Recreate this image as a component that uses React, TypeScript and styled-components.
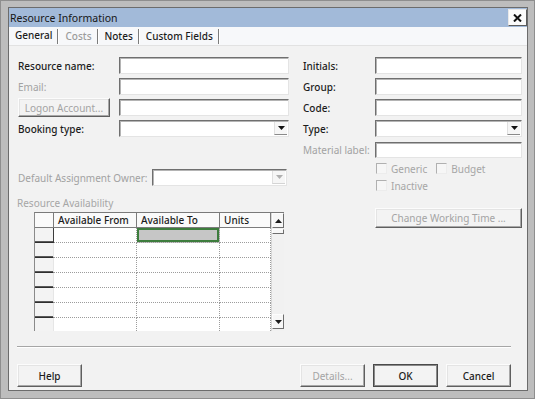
import styled, { createGlobalStyle } from "styled-components";

const GlobalStyle = createGlobalStyle`
  html, body {
    margin: 0;
    padding: 0;
  }
  body {
    font-family: "Noto Sans", "Open Sans", sans-serif;
    font-size: 10px;
    color: #1c1c1c;
  }
  * {
    box-sizing: border-box;
  }
`;

const Window = styled.div`
  width: 535px;
  height: 399px;
  padding: 6px 6px 7px 7px;
  background: #bdbdbd;
  border: 1px solid #8e8e8e;
`;

const Panel = styled.div`
  display: flex;
  flex-direction: column;
  height: 100%;
  border: 1px solid #6c6c6c;
  background: #f2f2f2;
`;

const TitleBar = styled.div`
  display: flex;
  align-items: center;
  justify-content: space-between;
  height: 19px;
  padding-left: 1px;
  background: #a2bad9;
  font-size: 10.5px;
  color: #161616;
`;

const CloseButton = styled.button`
  display: flex;
  align-items: center;
  justify-content: center;
  width: 19px;
  height: 17px;
  padding: 0;
  background: #fbfbfb;
  border: 1px solid;
  border-color: #e8e8e8 #5c5c5c #5c5c5c #e8e8e8;
`;

const TabStrip = styled.div`
  display: flex;
  align-items: center;
  height: 19px;
  padding-left: 3px;
  background: #f7f8fa;
  border-bottom: 1px solid #e2e2e2;
`;

const Tab = styled.div<{ $disabled?: boolean }>`
  height: 15px;
  line-height: 14px;
  padding: 0 5px 0 7px;
  border-right: 1px solid #7c7c7c;
  box-shadow: 1px 0 0 #ffffff;
  color: ${(p) => (p.$disabled ? "#9c9c9c" : "#1c1c1c")};
  font-weight: 500;

  &:first-child {
    padding-left: 3px;
    line-height: 12px;
  }
`;

const Body = styled.div`
  flex: 1;
  display: flex;
  flex-direction: column;
  padding: 10px 5px 3px 8px;
`;

const TopArea = styled.div`
  display: flex;
  gap: 13px;
`;

const Column = styled.div<{ $width?: number }>`
  display: flex;
  flex-direction: column;
  gap: 2px;
  width: ${(p) => (p.$width ? `${p.$width}px` : "auto")};
  flex: ${(p) => (p.$width ? "none" : "1")};
`;

const Row = styled.div<{ $top?: number }>`
  display: flex;
  align-items: center;
  height: 19px;
  margin-top: ${(p) => p.$top ?? 0}px;
`;

const Label = styled.div<{ $width: number; $disabled?: boolean }>`
  width: ${(p) => p.$width}px;
  flex: none;
  padding-left: 1px;
  white-space: nowrap;
  font-weight: ${(p) => (p.$disabled ? 400 : 500)};
  color: ${(p) => (p.$disabled ? "#a2a2a2" : "#1c1c1c")};
`;

const Field = styled.div<{ $height?: number; $right?: number }>`
  position: relative;
  flex: 1;
  height: ${(p) => p.$height ?? 17}px;
  margin-right: ${(p) => p.$right ?? 0}px;
  background: #ffffff;
  border: 1px solid;
  border-color: #6f6f6f #e4e4e4 #e4e4e4 #6f6f6f;
  box-shadow: inset 1px 1px 0 #b4b4b4;
`;

const DropArrow = styled.div<{ $disabled?: boolean }>`
  position: absolute;
  top: 1px;
  right: 1px;
  bottom: 1px;
  width: 13px;
  display: flex;
  align-items: center;
  justify-content: center;
  background: #f6f6f6;
  border-left: 1px solid #e0e0e0;
  border-bottom: 1px solid ${(p) => (p.$disabled ? "#d4d4d4" : "#8a8a8a")};
  color: ${(p) => (p.$disabled ? "#b0b0b0" : "#111111")};
`;

const RaisedButton = styled.button<{ $width?: number; $disabled?: boolean; $default?: boolean }>`
  width: ${(p) => (p.$width ? `${p.$width}px` : "100%")};
  height: ${(p) => (p.$width ? "19px" : "20px")};
  padding: 0;
  font-family: inherit;
  font-size: 10px;
  font-weight: ${(p) => (p.$disabled ? 400 : 600)};
  color: ${(p) => (p.$disabled ? "#a4a4a4" : "#1c1c1c")};
  background: #f3f3f3;
  border: 1px solid;
  border-color: ${(p) => (p.$default ? "#4a4a4a" : "#fcfcfc #5f5f5f #5f5f5f #fcfcfc")};
  box-shadow: ${(p) =>
    p.$default ? "inset 0 0 0 1px #8a8a8a" : "inset -1px -1px 0 #a8a8a8, inset 1px 1px 0 #e4e4e4"};
`;

const CheckRow = styled.div<{ $top: number }>`
  display: flex;
  align-items: center;
  gap: 4px;
  height: 13px;
  margin-top: ${(p) => p.$top}px;
  padding-left: 74px;
`;

const CheckBox = styled.span`
  width: 11px;
  height: 11px;
  flex: none;
  background: #f6f6f6;
  border: 1px solid;
  border-color: #b0b0b0 #ececec #ececec #b0b0b0;
`;

const CheckText = styled.span<{ $gap?: number }>`
  color: #a6a6a6;
  margin-right: ${(p) => p.$gap ?? 0}px;
`;

const SectionTitle = styled.div`
  margin-top: 7px;
  height: 14px;
  color: #a6a6a6;
`;

const GridFrame = styled.div`
  display: flex;
  width: 250px;
  height: 119px;
  margin-left: 17px;
  overflow: hidden;
  border-top: 1px solid #7a7a7a;
  border-left: 1px solid #8a8a8a;
  background: #ffffff;
`;

const Table = styled.table`
  width: 236px;
  border-spacing: 0;
  table-layout: fixed;
`;

const HeadCell = styled.th<{ $width: number }>`
  width: ${(p) => p.$width}px;
  height: 15px;
  padding: 0 0 0 4px;
  text-align: left;
  font-weight: 500;
  background: #fafafa;
  border-right: 1px solid #7c7c7c;
  border-bottom: 1px solid #7c7c7c;
`;

const RowHead = styled.td<{ $mark?: boolean }>`
  height: 15px;
  padding: 0;
  background: #f3f3f3;
  border-bottom: 1px solid #2e2e2e;
  box-shadow: inset 0 -1px 0 #5a5a5a;
  border-right: 1px solid ${(p) => (p.$mark ? "#3c3c3c" : "#e6e6e6")};
`;

const Cell = styled.td<{ $selected?: boolean }>`
  height: 15px;
  padding: 0;
  background: ${(p) => (p.$selected ? "#c6c6c6" : "#ffffff")};
  border-right: 1px dotted #9c9c9c;
  border-bottom: 1px dotted #9c9c9c;
  box-shadow: ${(p) => (p.$selected ? "inset 0 0 0 2px #3d7d3d" : "none")};
`;

const ScrollBar = styled.div`
  display: flex;
  flex-direction: column;
  width: 14px;
  background: #f1f1f1;
  border-left: 1px solid #d8d8d8;
`;

const ScrollButton = styled.div`
  display: flex;
  align-items: center;
  justify-content: center;
  height: 15px;
  background: #f7f7f7;
  border: 1px solid;
  border-color: #fdfdfd #6e6e6e #6e6e6e #fdfdfd;
`;

const Thumb = styled.div`
  height: 5px;
  margin: 1px 0 0;
  background: #f7f7f7;
  border: 1px solid;
  border-color: #fdfdfd #6e6e6e #6e6e6e #fdfdfd;
`;

const ScrollGap = styled.div`
  flex: 1;
`;

const ScrollEnd = styled.div`
  height: 2px;
`;

const Footer = styled.div`
  margin-top: auto;
  margin-right: 11px;
`;

const Separator = styled.div`
  height: 2px;
  border-top: 1px solid #a6a6a6;
  border-bottom: 1px solid #ffffff;
`;

const ButtonRow = styled.div`
  display: flex;
  gap: 8px;
  margin-top: 16px;

  & > :first-child {
    margin-right: auto;
  }
`;

const FooterButton = styled(RaisedButton)`
  width: 65px;
  height: 23px;
  font-weight: ${(p) => (p.$disabled ? 400 : 500)};
`;

function Triangle({ up }: { up?: boolean }) {
  return (
    <svg width="7" height="4" viewBox="0 0 7 4">
      <path d={up ? "M0 4 L3.5 0 L7 4 Z" : "M0 0 L7 0 L3.5 4 Z"} fill="currentColor" />
    </svg>
  );
}

function Select({ disabled, right }: { disabled?: boolean; right?: number }) {
  return (
    <Field $right={right}>
      <DropArrow $disabled={disabled}>
        <Triangle />
      </DropArrow>
    </Field>
  );
}

const leftFields = [
  { label: "Resource name:" },
  { label: "Email:", disabled: true },
  { label: "Logon Account...", button: true },
  { label: "Booking type:", select: true },
];

const rightFields = [
  { label: "Initials:" },
  { label: "Group:" },
  { label: "Code:" },
  { label: "Type:", select: true },
  { label: "Material label:", disabled: true },
];

const columns = [
  { title: "", width: 19 },
  { title: "Available From", width: 83 },
  { title: "Available To", width: 83 },
  { title: "Units", width: 51 },
];

export default function App() {
  const rows = [0, 1, 2, 3, 4, 5, 6];

  return (
    <>
      <GlobalStyle />
      <Window>
        <Panel>
          <TitleBar>
            <span>Resource Information</span>
            <CloseButton>
              <svg width="9" height="8" viewBox="0 0 9 8">
                <path d="M1 0.5 L8 7.5 M8 0.5 L1 7.5" stroke="#111" strokeWidth="2" />
              </svg>
            </CloseButton>
          </TitleBar>

          <TabStrip>
            <Tab>General</Tab>
            <Tab $disabled>Costs</Tab>
            <Tab>Notes</Tab>
            <Tab>Custom Fields</Tab>
          </TabStrip>

          <Body>
            <TopArea>
              <Column $width={272}>
                {leftFields.map((f) => (
                  <Row key={f.label}>
                    {f.button ? (
                      <Label $width={102}>
                        <RaisedButton $width={92} $disabled>
                          {f.label}
                        </RaisedButton>
                      </Label>
                    ) : (
                      <Label $width={102} $disabled={f.disabled}>
                        {f.label}
                      </Label>
                    )}
                    {f.select ? <Select /> : <Field />}
                  </Row>
                ))}

                <Row $top={28}>
                  <Label $width={135} $disabled>
                    Default Assignment Owner:
                  </Label>
                  <Select disabled right={2} />
                </Row>

                <SectionTitle>Resource Availability</SectionTitle>

                <GridFrame>
                  <Table>
                    <thead>
                      <tr>
                        {columns.map((c, i) => (
                          <HeadCell key={i} $width={c.width}>
                            {c.title}
                          </HeadCell>
                        ))}
                      </tr>
                    </thead>
                    <tbody>
                      {rows.map((r) => (
                        <tr key={r}>
                          <RowHead $mark={r === 0} />
                          <Cell />
                          <Cell $selected={r === 0} />
                          <Cell />
                        </tr>
                      ))}
                    </tbody>
                  </Table>
                  <ScrollBar>
                    <ScrollButton>
                      <Triangle up />
                    </ScrollButton>
                    <Thumb />
                    <ScrollGap />
                    <ScrollButton>
                      <Triangle />
                    </ScrollButton>
                    <ScrollEnd />
                  </ScrollBar>
                </GridFrame>
              </Column>

              <Column>
                {rightFields.map((f) => (
                  <Row key={f.label}>
                    <Label $width={73} $disabled={f.disabled}>
                      {f.label}
                    </Label>
                    {f.select ? <Select /> : <Field $height={f.disabled ? 16 : 17} />}
                  </Row>
                ))}
                <CheckRow $top={1}>
                  <CheckBox />
                  <CheckText $gap={5}>Generic</CheckText>
                  <CheckBox />
                  <CheckText>Budget</CheckText>
                </CheckRow>
                <CheckRow $top={2}>
                  <CheckBox />
                  <CheckText>Inactive</CheckText>
                </CheckRow>
                <Row $top={14}>
                  <Label $width={73} />
                  <RaisedButton $disabled>Change Working Time ...</RaisedButton>
                </Row>
              </Column>
            </TopArea>

            <Footer>
              <Separator />
              <ButtonRow>
                <FooterButton>Help</FooterButton>
                <FooterButton $disabled>Details...</FooterButton>
                <FooterButton $default>OK</FooterButton>
                <FooterButton>Cancel</FooterButton>
              </ButtonRow>
            </Footer>
          </Body>
        </Panel>
      </Window>
    </>
  );
}
